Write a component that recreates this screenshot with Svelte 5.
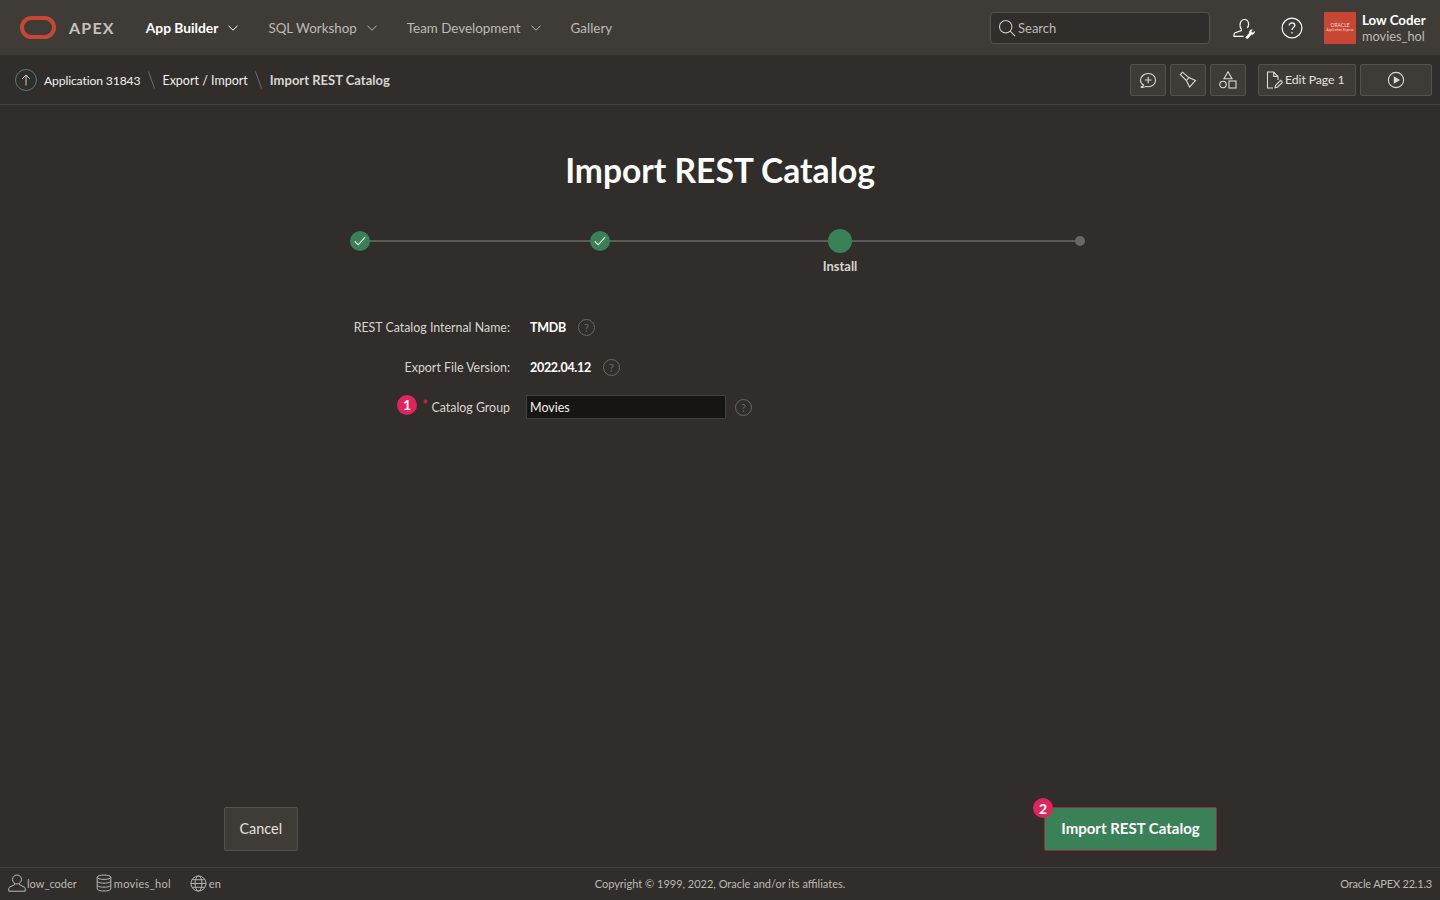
<script>
	const nav = [
		{ label: 'App Builder', active: true, menu: true },
		{ label: 'SQL Workshop', menu: true },
		{ label: 'Team Development', menu: true },
		{ label: 'Gallery' }
	];
	const steps = [
		{ done: true },
		{ done: true },
		{ current: true, label: 'Install' },
		{}
	];
</script>

<div class="page">
	<header class="topbar">
		<svg class="logo" viewBox="0 0 36 23" width="36" height="23">
			<rect x="2" y="2" width="32" height="19" rx="9.5" fill="none" stroke="#c74634" stroke-width="4" />
		</svg>
		<span class="apex">APEX</span>
		<nav class="nav">
			{#each nav as item}
				<span class="nav-item" class:active={item.active}>
					{item.label}
					{#if item.menu}
						<svg viewBox="0 0 10 6" width="10" height="6"><path d="M.5.8 5 5.2 9.5.8" fill="none" stroke="currentColor" /></svg>
					{/if}
				</span>
			{/each}
		</nav>
		<div class="search">
			<svg viewBox="0 0 18 18" width="18" height="18" fill="none" stroke="#cfccc8" stroke-width="1.1">
				<circle cx="7.7" cy="7.7" r="6.2" />
				<path d="m12.2 12.2 5 5" />
			</svg>
			<span>Search</span>
		</div>
		<svg class="admin" viewBox="0 0 22 22" width="22" height="22" fill="none" stroke="#fff" stroke-width="1.2">
			<path d="M7 8.2c0-3 1.6-5.7 4.3-5.700 2.800 0 4.300 2.400 4.300 5 0 1.300-.5 2.500-1.400 3.300" />
			<path d="M8.500 12.200c-.9-.8-1.500-2.200-1.500-4" />
			<path d="M8.400 12.400v1.200L2.200 15.800c-.8.400-1.200 1-1.200 2v1.600h9.500" />
			<path d="m12.500 20.600 4-4.600c-.5-1.800.8-3.500 2.800-3.300l-1.200 1.700.7 1.300 1.600.1 1-1.600c.5 1.800-1.200 3.600-3.100 3.100l-3.700 4.400z" fill="#fff" stroke-width=".6" />
		</svg>
		<svg class="help" viewBox="0 0 22 22" width="22" height="22" fill="none" stroke="#fff" stroke-width="1.2">
			<circle cx="11" cy="11" r="9.9" />
			<path d="M8.200 8.600c0-1.700 1.200-2.700 2.800-2.700s2.800 1 2.800 2.500c0 2.200-2.800 2.200-2.800 4.600" />
			<circle cx="11" cy="15.800" r=".5" fill="#fff" stroke-width=".5" />
		</svg>
		<div class="workspace-logo"><b>ORACLE</b><i>Application Express</i></div>
		<div class="user">
			<strong>Low Coder</strong>
			<span>movies_hol</span>
		</div>
	</header>

	<div class="crumbs">
		<span class="up">
			<svg viewBox="0 0 10 12" width="10" height="12" fill="none" stroke="#cfccc8"><path d="M5 11.500V1M1.200 4.800 5 1l3.800 3.800" /></svg>
		</span>
		<span class="crumb app">Application 31843</span>
		<i class="slash"></i>
		<span class="crumb">Export / Import</span>
		<i class="slash"></i>
		<span class="crumb current">Import REST Catalog</span>

		<div class="tools">
			<span class="tool">
				<svg viewBox="0 0 18 18" width="18" height="18" fill="none" stroke="#dedbd7" stroke-width="1.1">
					<path d="M4.600 14c-1.900-1.100-3.100-2.800-3.100-4.800C1.500 5.500 4.900 2.500 9.200 2.500s7.300 3 7.300 6.700-3.200 6.500-7.300 6.500c-.8 0-1.500-.1-2.100-.3-1.300.8-3 1.200-5.400.9 1.500-.5 2.600-1.200 2.900-2.300z" />
					<path d="M9.200 5.700v6.600M5.900 9h6.600" />
				</svg>
			</span>
			<span class="tool">
				<svg viewBox="0 0 18 18" width="18" height="18" fill="none" stroke="#dedbd7" stroke-width="1.1">
					<path d="M1.300 3.600 3.500 1.200l6.400 5.400 6.600 2.800-5.900 6.700-3.200-6.600z" />
					<path d="m7.400 9.500 2.500-2.900" />
				</svg>
			</span>
			<span class="tool">
				<svg viewBox="0 0 18 18" width="18" height="18" fill="none" stroke="#dedbd7" stroke-width="1.1">
					<path d="m9 .8 4 7H5z" />
					<circle cx="4" cy="13.500" r="3.200" />
					<rect x="10" y="10" width="7" height="7" />
				</svg>
			</span>
			<span class="tool edit">
				<svg viewBox="0 0 18 18" width="18" height="18" fill="none" stroke="#dedbd7" stroke-width="1.1">
					<path d="M8 17H2.500V1h6.200L13 5.400V9" />
					<path d="M8.700 1v4.400H13" />
					<path d="m10 16.800.6-2.500 5-5 1.900 1.900-5 5z" />
				</svg>
				Edit Page 1
			</span>
			<span class="tool run">
				<svg viewBox="0 0 18 18" width="18" height="18">
					<circle cx="9" cy="9" r="7.600" fill="none" stroke="#dedbd7" stroke-width="1.1" />
					<path d="M6.800 5.200v7.600L13 9z" fill="#dedbd7" />
				</svg>
			</span>
		</div>
	</div>

	<main class="wizard">
		<h1>Import REST Catalog</h1>

		<ol class="steps">
			{#each steps as step}
				<li class="step">
					<span class="dot" class:done={step.done} class:now={step.current}>
						{#if step.done}
							<svg viewBox="0 0 12 10" width="12" height="10" fill="none" stroke="#fff" stroke-width="1.100"><path d="m.8 5.400 3.400 3.400L11.200 1" /></svg>
						{/if}
					</span>
					{#if step.label}<span class="step-label">{step.label}</span>{/if}
				</li>
			{/each}
		</ol>

		<div class="form">
			<div class="row">
				<span class="label">REST Catalog Internal Name:</span>
				<span class="value">TMDB</span>
				<span class="hint">?</span>
			</div>
			<div class="row">
				<span class="label">Export File Version:</span>
				<span class="value">2022.04.12</span>
				<span class="hint">?</span>
			</div>
			<div class="row">
				<span class="label">
					<span class="badge one">1</span>
					<span class="req">*</span>
					Catalog Group
				</span>
				<input class="field" value="Movies" />
				<span class="hint">?</span>
			</div>
		</div>

		<div class="actions">
			<button class="btn">Cancel</button>
			<button class="btn primary">
				<span class="badge two">2</span>
				Import REST Catalog
			</button>
		</div>
	</main>

	<footer class="foot">
		<div class="foot-left">
			<span class="foot-item">
				<svg viewBox="0 0 18 18" width="18" height="18" fill="none" stroke="#bdbab5" stroke-width="1"><circle cx="9" cy="5.500" r="4.500" /><path d="M6.500 9.500v1.300L1.800 13c-.7.300-1 .8-1 1.500v2.700h16.400v-2.700c0-.7-.3-1.200-1-1.500l-4.700-2.200V9.500" /></svg>
				low_coder
			</span>
			<span class="foot-item schema">
				<svg viewBox="0 0 16 18" width="16" height="18" fill="none" stroke="#bdbab5" stroke-width="1"><ellipse cx="8" cy="3.200" rx="6.800" ry="2.200" /><path d="M1.200 3.200v11.600c0 1.200 3 2.200 6.800 2.200s6.800-1 6.800-2.200V3.200M1.200 7c0 1.200 3 2.200 6.800 2.200s6.800-1 6.800-2.200M1.200 11c0 1.200 3 2.200 6.800 2.200s6.800-1 6.800-2.200" /></svg>
				movies_hol
			</span>
			<span class="foot-item lang">
				<svg viewBox="0 0 18 18" width="17" height="17" fill="none" stroke="#bdbab5" stroke-width="1"><circle cx="9" cy="9" r="8" /><ellipse cx="9" cy="9" rx="3.600" ry="8" /><path d="M1 9h16M2.200 5h13.600M2.200 13h13.600" /></svg>
				en
			</span>
		</div>
		<span class="copy">Copyright © 1999, 2022, Oracle and/or its affiliates.</span>
		<span class="version">Oracle APEX 22.1.3</span>
	</footer>
</div>

<style>
	:global(body) {
		margin: 0;
		background: #312d2a;
	}

	.page {
		height: 900px;
		display: flex;
		flex-direction: column;
		font-family: Lato, "Noto Sans", sans-serif;
		font-size: 13px;
		color: #e4e1dd;
		overflow: hidden;
	}

	/* Top bar */
	.topbar {
		height: 55px;
		flex: none;
		box-sizing: border-box;
		display: flex;
		align-items: center;
		padding: 0 14px 0 20px;
		background: #3f3c38;
	}

	.apex {
		margin-left: 13px;
		font-size: 16px;
		font-weight: 700;
		letter-spacing: 1.200px;
		color: #c4c1bc;
	}

	.nav {
		display: flex;
		margin-left: 31px;
		gap: 30px;
	}

	.nav-item {
		display: flex;
		align-items: center;
		gap: 10px;
		color: #bdbab5;
		font-size: 13.400px;
	}

	.nav-item.active {
		color: #fff;
		font-weight: 700;
		font-size: 13.800px;
	}

	.search {
		margin-left: auto;
		width: 220px;
		height: 32px;
		box-sizing: border-box;
		display: flex;
		align-items: center;
		gap: 2px;
		padding-left: 7px;
		background: #312d2a;
		border: 1px solid #55514c;
		border-radius: 4px;
		color: #bdbab5;
	}

	.admin {
		margin-left: 23px;
	}

	.help {
		margin-left: 26px;
	}

	.workspace-logo {
		margin-left: 21px;
		width: 32px;
		height: 32px;
		display: flex;
		flex-direction: column;
		align-items: center;
		justify-content: center;
		background: #c74634;
		color: #f4d6d0;
		border-radius: 1px;
		white-space: nowrap;
	}

	.workspace-logo b {
		font-size: 5px;
		font-weight: 400;
		line-height: 5px;
	}

	.workspace-logo i {
		font-size: 3.200px;
		font-style: normal;
		line-height: 4px;
	}

	.user {
		flex: none;
		width: 64px;
		margin-left: 6px;
		padding-top: 1px;
		display: flex;
		flex-direction: column;
		line-height: 17px;
		white-space: nowrap;
	}

	.user strong {
		padding-top: 1px;
		color: #fff;
		font-weight: 700;
		font-size: 13.300px;
		line-height: 16px;
	}

	.user span {
		color: #bdbab5;
		font-size: 12.800px;
	}

	/* Breadcrumb bar */
	.crumbs {
		height: 50px;
		flex: none;
		box-sizing: border-box;
		display: flex;
		align-items: center;
		padding: 0 8px 0 15px;
		border-bottom: 1px solid #45413d;
	}

	.up {
		width: 20px;
		height: 20px;
		display: flex;
		align-items: center;
		justify-content: center;
		margin-right: 7px;
		border: 1px solid #4a7d8c;
		border-radius: 50%;
	}

	.crumb {
		margin-top: 1px;
		color: #f1efed;
		font-size: 12.500px;
	}

	.crumb.app {
		font-size: 12.200px;
		letter-spacing: -0.150px;
	}

	.crumb.current {
		margin-top: 0;
		font-weight: 700;
		font-size: 13px;
		color: #d8d5d1;
	}

	.slash {
		width: 1px;
		height: 18px;
		margin: 0 10.500px;
		background: #6b6762;
		transform: rotate(-20deg);
	}

	.tools {
		margin-left: auto;
		display: flex;
		gap: 4px;
	}

	.tool {
		width: 36px;
		height: 32px;
		box-sizing: border-box;
		display: flex;
		align-items: center;
		justify-content: center;
		gap: 2px;
		background: #3f3c38;
		border: 1px solid #55514c;
		border-radius: 2px;
		color: #e4e1dd;
		font-size: 12.300px;
		letter-spacing: -0.100px;
	}

	.tool.edit {
		width: 98px;
		margin-left: 8px;
		justify-content: flex-start;
		padding-left: 6px;
	}

	.tool.run {
		width: 72px;
	}

	/* Wizard */
	.wizard {
		flex: 1;
		width: 992px;
		margin: 0 auto;
		display: flex;
		flex-direction: column;
	}

	h1 {
		margin: 45px 0 0;
		text-align: center;
		font-size: 33.600px;
		font-weight: 700;
		line-height: 40px;
		color: #fff;
	}

	.steps {
		display: grid;
		grid-template-columns: repeat(4, 240px);
		justify-content: center;
		margin: 39px 0 0;
		padding: 0;
		list-style: none;
		height: 50px;
	}

	.step {
		position: relative;
		display: flex;
		flex-direction: column;
		align-items: center;
	}

	.step:not(:last-child)::after {
		content: "";
		position: absolute;
		top: 11px;
		left: 50%;
		width: 240px;
		height: 2px;
		background: #5f5b55;
	}

	.dot {
		position: relative;
		z-index: 1;
		width: 20px;
		height: 20px;
		margin-top: 2px;
		display: flex;
		align-items: center;
		justify-content: center;
		border-radius: 50%;
	}

	.dot.done {
		background: #3a8158;
	}

	.dot.now {
		width: 24px;
		height: 24px;
		margin-top: 0;
		background: #3a8158;
	}

	.step:last-child .dot {
		width: 10px;
		height: 10px;
		margin-top: 7px;
		background: #6b6762;
	}

	.step-label {
		margin-top: 5px;
		font-size: 13px;
		font-weight: 700;
		line-height: 16px;
		color: #d8d5d1;
	}

	.form {
		margin-top: 28px;
		display: flex;
		flex-direction: column;
	}

	.row {
		height: 40px;
		display: flex;
		align-items: center;
	}

	.label {
		position: relative;
		width: 286px;
		text-align: right;
		color: #d8d5d1;
		font-size: 12.400px;
	}

	.value {
		margin-left: 20px;
		color: #fff;
		font-weight: 700;
		font-size: 12.500px;
		letter-spacing: -0.300px;
	}

	.hint {
		margin-left: 12px;
		width: 17px;
		height: 17px;
		box-sizing: border-box;
		display: flex;
		align-items: center;
		justify-content: center;
		border: 1px solid #6b6762;
		border-radius: 50%;
		color: #6b6762;
		font-size: 11px;
	}

	.field {
		width: 200px;
		height: 24px;
		box-sizing: border-box;
		margin-left: 16px;
		padding: 0 3px;
		background: #161513;
		border: 1px solid #45413d;
		border-radius: 1px;
		color: #f1efed;
		font: inherit;
		font-size: 12.500px;
	}

	.field + .hint {
		margin-left: 9px;
	}

	.req {
		position: absolute;
		left: 198px;
		top: -5px;
		color: #d63b25;
		font-size: 15px;
	}

	.badge {
		position: absolute;
		width: 20px;
		height: 20px;
		display: flex;
		align-items: center;
		justify-content: center;
		border-radius: 50%;
		background: #e0245e;
		color: #fff;
		font-size: 14px;
		font-weight: 700;
	}

	.badge.one {
		left: 173px;
		top: -5px;
	}

	.badge.two {
		left: -12px;
		top: -10px;
	}

	.actions {
		margin-top: auto;
		margin-bottom: 16px;
		display: flex;
		justify-content: space-between;
	}

	.btn {
		position: relative;
		height: 44px;
		padding: 0 14.500px 2px;
		box-sizing: border-box;
		background: #3f3c38;
		border: 1px solid #55514c;
		border-radius: 2px;
		color: #e4e1dd;
		font: inherit;
		font-size: 14.400px;
	}

	.btn.primary {
		width: 173px;
		padding: 0 0 2px;
		margin-right: -1px;
		background: #3a8158;
		border: 1px solid #962c4c;
		color: #fff;
		font-weight: 700;
		font-size: 15px;
	}

	/* Footer */
	.foot {
		position: relative;
		height: 33px;
		flex: none;
		box-sizing: border-box;
		display: flex;
		align-items: center;
		justify-content: space-between;
		padding: 0 8px 2px;
		border-top: 1px solid #45413d;
		color: #bdbab5;
		font-size: 11px;
	}

	.foot-left {
		display: flex;
		gap: 19px;
	}

	.foot-item {
		display: flex;
		align-items: center;
		gap: 1px;
	}

	.foot-item.schema {
		gap: 2px;
		letter-spacing: 0.300px;
	}

	.foot-item.lang {
		gap: 2px;
	}

	.copy {
		position: absolute;
		left: 0;
		right: 0;
		text-align: center;
	}

	.version {
		letter-spacing: -0.200px;
	}
</style>
